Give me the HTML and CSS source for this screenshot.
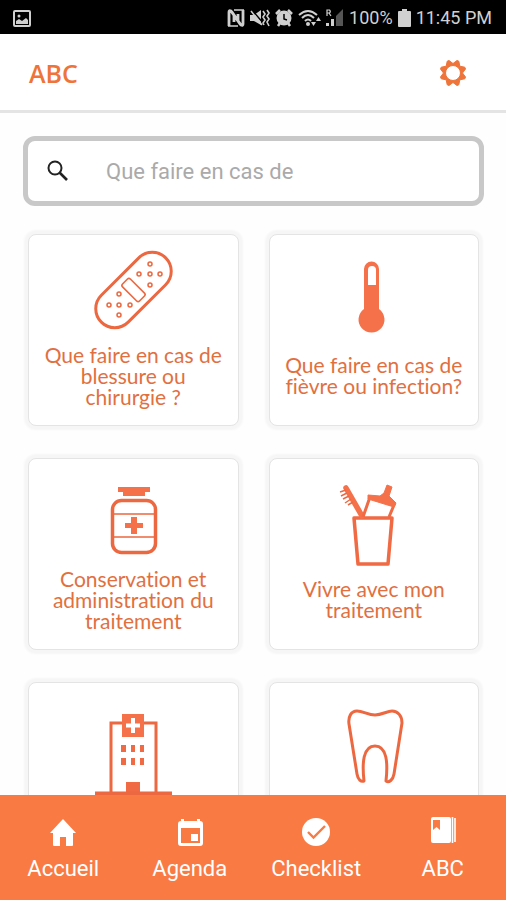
FILE: index.html
```
<!DOCTYPE html>
<html lang="fr">

<head>
    <meta charset="UTF-8">
    <meta name="viewport" content="width=device-width, initial-scale=1">
    <title>ABC</title>
    <link rel="stylesheet" href="styles.css">
</head>

<body>

<div class="status">
    <svg class="status-picture" width="18" height="17" viewBox="0 0 18 17">
        <rect x="1" y="1" width="16" height="15" rx="1" fill="none" stroke="#d0d0d0" stroke-width="2"/>
        <path d="M3 14V11L6 9L9 11L13 8L15 10V14Z" fill="#d0d0d0"/>
        <circle cx="6" cy="6" r="1.5" fill="#d0d0d0"/>
    </svg>
    <svg width="18" height="18" viewBox="0 0 18 18">
        <path d="M2 17V3Q2 1 4 2L11 12V5M16 1V15Q16 17 14 16L7 6V13" fill="none" stroke="#d0d0d0" stroke-width="2.800"/>
        <path d="M7 1H17M1 17H11" fill="none" stroke="#d0d0d0" stroke-width="1.500"/>
    </svg>
    <svg width="20" height="18" viewBox="0 0 20 18">
        <path d="M0 6H4L11 1V16L4 12H0Z" fill="#d0d0d0"/>
        <path d="M2 1L14 15" stroke="#000" stroke-width="1.500"/>
        <path d="M1 2L12 16" stroke="#d0d0d0" stroke-width="1.500"/>
        <path d="M13 2L15 5L13 8L15 11L13 14L14 16M17 1L19 4L17 7L19 10L17 13L19 17" fill="none" stroke="#d0d0d0" stroke-width="1.600"/>
    </svg>
    <svg width="18" height="18" viewBox="0 0 18 18">
        <circle cx="9" cy="9" r="7.500" fill="#d0d0d0"/>
        <path d="M1 5L5 1M13 1L17 5M3 17L5 14M15 17L13 14" stroke="#d0d0d0" stroke-width="2.500"/>
        <path d="M9 5V10L12 11" fill="none" stroke="#000" stroke-width="1.500"/>
    </svg>
    <svg width="23" height="18" viewBox="0 0 23 18">
        <path d="M1 6Q10 -2 19 6M4 9Q10 3 16 9M7 12Q10 9 13 12" fill="none" stroke="#d0d0d0" stroke-width="2"/>
        <circle cx="10" cy="15" r="2" fill="#d0d0d0"/>
        <path d="M13 13H18L15.500 17ZM18 12L20.500 8L23 12Z" fill="#d0d0d0"/>
    </svg>
    <svg width="18" height="18" viewBox="0 0 18 18">
        <path d="M1 7V1H3.500Q5 2.500 3.500 4H1M3 4L5 7" fill="none" stroke="#d0d0d0" stroke-width="1.200"/>
        <path d="M0 14H3V17H0ZM5 10H8V17H5Z" fill="#d0d0d0"/>
        <path d="M10 7L17 0V17H10Z" fill="#555"/>
    </svg>
    <span>100%</span>
    <svg width="13" height="18" viewBox="0 0 13 18">
        <path d="M4 0H9V2H12Q13 2 13 3V17Q13 18 12 18H1Q0 18 0 17V3Q0 2 1 2H4Z" fill="#d0d0d0"/>
    </svg>
    <span>11:45 PM</span>
</div>

<header class="header">
    <h1 class="title">ABC</h1>
    <button class="settings" type="button" aria-label="Paramètres">
        <svg width="28" height="28" viewBox="-14 -14 28 28">
            <path fill-rule="evenodd" d="M9.500 0L12.500 4L11.800 5.800L6.800 6.800L5.800 11.800L4 12.500L0 9.500L-4 12.500L-5.800 11.800L-6.800 6.800L-11.800 5.800L-12.500 4L-9.500 0L-12.500 -4L-11.800 -5.800L-6.800 -6.800L-5.800 -11.800L-4 -12.500L0 -9.500L4 -12.500L5.800 -11.800L6.800 -6.800L11.800 -5.800L12.500 -4ZM7.500 0A7.500 7.500 0 1 0 -7.500 0A7.500 7.500 0 1 0 7.500 0Z" fill="#ee7439" stroke="#ee7439" stroke-linejoin="round"/>
        </svg>
    </button>
</header>

<main class="content">
    <form class="search">
        <label class="search-icon" for="search" aria-label="Rechercher">
            <svg width="22" height="22" viewBox="0 0 22 22">
                <circle cx="8" cy="8" r="6.500" fill="none" stroke="#222" stroke-width="2"/>
                <path d="M12.500 12.500L20 20" stroke="#222" stroke-width="2.600"/>
            </svg>
        </label>
        <input class="search-input" id="search" type="text" placeholder="Que faire en cas de">
    </form>

    <div class="cards">
        <a class="card" href="#blessure">
            <svg class="card-icon" width="80" height="80" viewBox="0 0 80 80">
                <g transform="rotate(-45 40.500 40)" fill="none" stroke="#ec6840">
                    <rect x="-5" y="21" width="91" height="38" rx="19" stroke-width="3"/>
                    <rect x="35" y="28" width="11" height="24" rx="2" stroke-width="1.600"/>
                </g>
                <g fill="none" stroke="#ec6840" stroke-width="1.500">
                    <circle cx="57" cy="14" r="2"/>
                    <circle cx="46" cy="24" r="2"/>
                    <circle cx="57" cy="24" r="2"/>
                    <circle cx="67" cy="24" r="2"/>
                    <circle cx="57" cy="35" r="2"/>
                    <circle cx="26" cy="44" r="2"/>
                    <circle cx="16" cy="55" r="2"/>
                    <circle cx="26" cy="55" r="2"/>
                    <circle cx="37" cy="55" r="2"/>
                    <circle cx="26" cy="65" r="2"/>
                </g>
            </svg>
            <span class="card-text">Que faire en cas de blessure ou chirurgie ?</span>
        </a>
        <a class="card" href="#fievre">
            <svg class="card-icon" width="80" height="80" viewBox="0 0 80 80">
                <path fill-rule="evenodd" d="M30 9A7 7 0 0 1 45 9V49A13 13 0 1 1 30 49ZM34 10V25H42V10A4 4 0 0 0 34 10Z" fill="#f5714a"/>
            </svg>
            <span class="card-text">Que faire en cas de fièvre ou infection?</span>
        </a>
        <a class="card" href="#conservation">
            <svg class="card-icon" width="80" height="80" viewBox="0 0 80 80">
                <path d="M25 13H57V18H52V22H30V18H25Z" fill="#f5714a"/>
                <rect x="19.500" y="26.500" width="43" height="52" rx="9" fill="none" stroke="#ec6840" stroke-width="3.500"/>
                <path d="M20 40H62M20 63H62" stroke="#ec6840" stroke-width="1.500"/>
                <path d="M38 43H44V49H50V54H44V60H38V54H32V49H38Z" fill="#f5714a"/>
            </svg>
            <span class="card-text">Conservation et administration du traitement</span>
        </a>
        <a class="card" href="#vivre">
            <svg class="card-icon" width="80" height="80" viewBox="0 0 80 80">
                <path d="M20 34H58L54 80H24Z" fill="none" stroke="#f06a44" stroke-width="3.500" stroke-linejoin="round"/>
                <path d="M12 4L28 32" stroke="#f5714a" stroke-width="5.500" stroke-linecap="round"/>
                <path d="M12 6L6 8M13 9L7 12M15 12L9 15M17 15L11 19M19 18L14 21" stroke="#ec6840" stroke-width="1.500"/>
                <path d="M29 33L36 13L60 21L55 33" fill="none" stroke="#f06a44" stroke-width="3"/>
                <path d="M34 11L46 12L50 9L53 1L58 3L55 12L62 19L60 23L34 15Z" fill="#f5714a" stroke="#f5714a"/>
            </svg>
            <span class="card-text">Vivre avec mon traitement</span>
        </a>
        <a class="card card-top" href="#hopital" aria-label="Hôpital">
            <svg class="card-icon" width="80" height="90" viewBox="0 -6 80 90">
                <path d="M18 80V9H63V80" fill="none" stroke="#ec6840" stroke-width="3"/>
                <rect x="29" y="0" width="22" height="23" fill="#f5714a"/>
                <path d="M40 4V19M33 11.500H47" stroke="#fff" stroke-width="4"/>
                <path d="M28 31H33V38H28ZM38 31H42V38H38ZM47 31H51V38H47ZM28 44H33V51H28ZM38 44H42V51H38ZM47 44H51V51H47ZM33 68H47V80H33Z" fill="#f06a44"/>
                <path d="M2 79.500H79" stroke="#ec6840" stroke-width="4"/>
            </svg>
        </a>
        <a class="card card-top" href="#dents" aria-label="Dents">
            <svg class="card-icon" width="80" height="80" viewBox="0 0 80 80">
                <path d="M23 3C17 3 14 9 15 16L23 66C24 72 27 74 30 73C28 55 29 38 41 38C53 38 54 55 52 73C55 75 59 72 60 66L68 15C68 8 64 3 58 3C53 3 48 7 41 7C34 7 29 3 23 3Z" fill="none" stroke="#ec6840" stroke-width="3" stroke-linejoin="round"/>
            </svg>
        </a>
    </div>
</main>

<nav class="nav">
    <a class="nav-item" href="#accueil">
        <svg width="32" height="32" viewBox="0 0 32 32">
            <path d="M16 3L29 17H26V29Q26 30 25 30H19V21H13V30H7Q6 30 6 29V17H3Z" fill="#fff"/>
        </svg>
        <span>Accueil</span>
    </a>
    <a class="nav-item" href="#agenda">
        <svg width="32" height="32" viewBox="0 0 32 32">
            <path fill-rule="evenodd" d="M7 3H10V5H23V3H26V5Q29 5 29 8V27Q29 30 26 30H7Q4 30 4 27V8Q4 5 7 5ZM7 12V27H26V12ZM17 18H24V25H17Z" fill="#fff"/>
        </svg>
        <span>Agenda</span>
    </a>
    <a class="nav-item" href="#checklist">
        <svg width="32" height="32" viewBox="0 0 32 32">
            <circle cx="16" cy="16" r="14" fill="#fff"/>
            <path d="M8 16L13.500 21.500L25 10" fill="none" stroke="#fa7a44" stroke-width="2.400"/>
        </svg>
        <span>Checklist</span>
    </a>
    <a class="nav-item" href="#abc">
        <svg width="32" height="32" viewBox="0 0 32 32">
            <path fill-rule="evenodd" d="M6 1H22Q24 1 24 3V25Q24 27 22 27H6Q4 27 4 25V3Q4 1 6 1ZM6 4V14L9.500 11L13 14V4Z" fill="#fff"/>
            <path d="M25.500 1V27M28 2V26" stroke="#fff" stroke-width="1.600"/>
        </svg>
        <span>ABC</span>
    </a>
</nav>

</body>

</html>
```
FILE: styles.css
```
* {
    margin: 0;
    padding: 0;
    box-sizing: border-box;
    text-decoration: none;
}
body {
    display: flex;
    flex-direction: column;
    height: 100vh;
    overflow: hidden;
    background: #fefefe;
    font-family: Roboto, sans-serif;
}
svg {
    display: block;
    flex: none;
    overflow: visible;
}

/* status bar */
.status {
    display: flex;
    align-items: center;
    gap: 5px;
    flex: none;
    height: 34px;
    padding: 2px 14px 0 13px;
    background: #000;
    color: #d0d0d0;
    font-size: 18px;
    line-height: 24px;
}
.status-picture {
    margin-right: auto;
}

/* header */
.header {
    display: flex;
    align-items: center;
    justify-content: space-between;
    flex: none;
    height: 79px;
    padding: 2px 39px 0 29px;
    border-bottom: 3px solid #e4e4e4;
    background: #fff;
}
.title {
    color: #ee7439;
    font-family: "Open Sans", sans-serif;
    font-size: 25px;
    font-weight: 600;
    line-height: 32px;
}
.settings {
    border: 0;
    background: none;
    cursor: pointer;
}

/* content */
.content {
    flex: 1;
    min-height: 0;
    padding: 23px 22px 0 23px;
    overflow: hidden;
}
.search {
    display: flex;
    align-items: center;
    height: 70px;
    border: 5px solid #c8c8c8;
    border-radius: 12px;
    background: #fff;
}
.search-icon {
    padding: 0 37px 0 19px;
}
.search-input {
    flex: 1;
    min-width: 0;
    height: 60px;
    border: 0;
    outline: 0;
    background: none;
    color: #222;
    font-family: Roboto, sans-serif;
    font-size: 22px;
}
.search-input::placeholder {
    color: #aaa;
}
.cards {
    display: grid;
    grid-template-columns: 1fr 1fr;
    gap: 32px 30px;
    padding: 28px 5px;
}
.card {
    display: flex;
    flex-direction: column;
    align-items: center;
    justify-content: center;
    height: 192px;
    padding: 0 10px 4px;
    border: 1px solid #e4e4e4;
    border-radius: 8px;
    background: #fff;
    box-shadow: 0 0 2px 4px #f6f6f6;
}
.card-top {
    justify-content: flex-start;
    padding-top: 25px;
}
.card-icon {
    margin-bottom: 14px;
}
.card-text {
    color: #e2703f;
    font-family: Lato, sans-serif;
    font-size: 21px;
    font-variant-ligatures: none;
    line-height: 21px;
    text-align: center;
}

/* bottom navigation */
.nav {
    display: flex;
    flex: none;
    height: 105px;
    padding-top: 21px;
    background: #fa7a44;
}
.nav-item {
    display: flex;
    flex: 1;
    flex-direction: column;
    align-items: center;
    gap: 7px;
    color: #fff;
    font-size: 22px;
    line-height: 28px;
}
```
